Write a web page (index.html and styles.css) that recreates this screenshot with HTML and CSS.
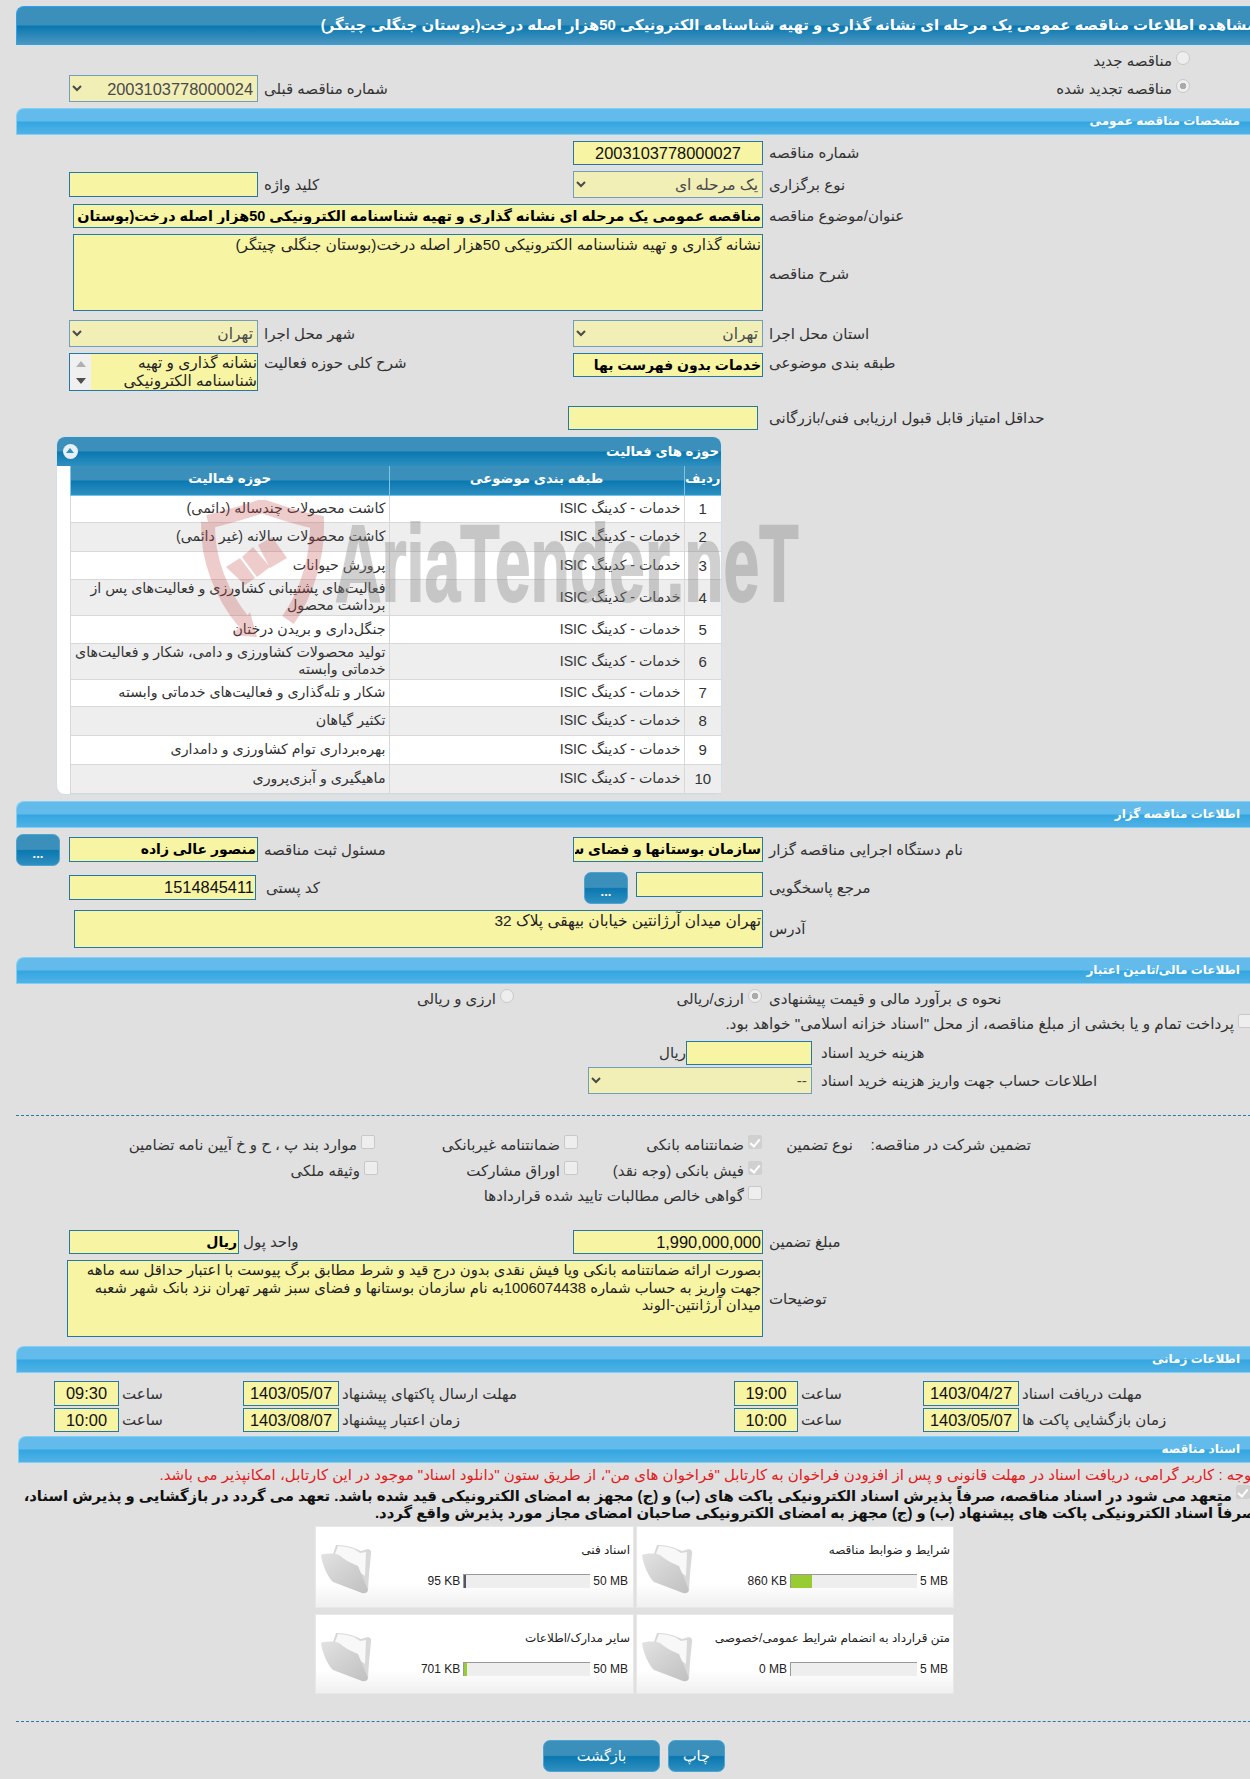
FILE: index.html
```html
<!DOCTYPE html>
<html lang="fa">
<head>
  <meta charset="UTF-8">
  <title>مشاهده اطلاعات مناقصه</title>
  <link rel="stylesheet" href="styles.css">
</head>
<body>
  <div class="page">
    <h1 class="title-bar">مشاهده اطلاعات مناقصه عمومی یک مرحله ای نشانه گذاری و تهیه شناسنامه الکترونیکی 50هزار اصله درخت(بوستان جنگلی چیتگر)</h1>

    <!-- Renewal -->
    <div class="grid-form renewal">
      <label class="check-line wide"><input type="radio" class="radio" disabled> مناقصه جدید</label>
      <label class="check-line first-col"><input type="radio" class="radio" checked disabled> مناقصه تجدید شده</label>
      <div class="field-label">شماره مناقصه قبلی</div>
      <select class="select num-value"><option>2003103778000024</option></select>
    </div>

    <!-- General -->
    <h2 class="section-bar">مشخصات مناقصه عمومی</h2>
    <div class="grid-form general">
      <div class="field-label">شماره مناقصه</div>
      <input class="input num center" value="2003103778000027" readonly>
      <div class="spacer"></div>

      <div class="field-label">نوع برگزاری</div>
      <select class="select"><option>یک مرحله ای</option></select>
      <div class="field-label">کلید واژه</div>
      <input class="input keyword" readonly>

      <div class="field-label">عنوان/موضوع مناقصه</div>
      <input class="input bold topic span-3" value="مناقصه عمومی یک مرحله ای نشانه گذاری و تهیه شناسنامه الکترونیکی 50هزار اصله درخت(بوستان جنگلی چیتگر)" readonly>

      <div class="field-label">شرح مناقصه</div>
      <textarea class="input area span-3" readonly>نشانه گذاری و تهیه شناسنامه الکترونیکی 50هزار اصله درخت(بوستان جنگلی چیتگر)</textarea>

      <div class="field-label">استان محل اجرا</div>
      <select class="select"><option>تهران</option></select>
      <div class="field-label">شهر محل اجرا</div>
      <select class="select"><option>تهران</option></select>

      <div class="field-label top">طبقه بندی موضوعی</div>
      <input class="input bold short" value="خدمات بدون فهرست بها" readonly>
      <div class="field-label top">شرح کلی حوزه فعالیت</div>
      <div class="scroll-box">
        <textarea class="input scroll-area" readonly>نشانه گذاری و تهیه شناسنامه الکترونیکی</textarea>
        <span class="scroll-rail"><i class="arrow-up"></i><i class="arrow-down"></i></span>
      </div>

      <div class="field-label">حداقل امتیاز قابل قبول ارزیابی فنی/بازرگانی</div>
      <input class="input shifted" readonly>
    </div>

    <!-- Activity table -->
    <div class="panel">
      <div class="panel-head">
        <span>حوزه های فعالیت</span>
        <span class="collapse"></span>
      </div>
      <table class="activity">
        <thead>
          <tr><th class="c-no">ردیف</th><th class="c-cat">طبقه بندی موضوعی</th><th>حوزه فعالیت</th></tr>
        </thead>
        <tbody>
          <tr class="h27"><td class="c-no">1</td><td>خدمات - کدینگ ISIC</td><td>کاشت محصولات چندساله (دائمی)</td></tr>
          <tr class="h29"><td class="c-no">2</td><td>خدمات - کدینگ ISIC</td><td>کاشت محصولات سالانه (غیر دائمی)</td></tr>
          <tr class="h28"><td class="c-no">3</td><td>خدمات - کدینگ ISIC</td><td>پرورش حیوانات</td></tr>
          <tr class="h36"><td class="c-no">4</td><td>خدمات - کدینگ ISIC</td><td>فعالیت‌های پشتیبانی کشاورزی و فعالیت‌های پس از برداشت محصول</td></tr>
          <tr class="h28"><td class="c-no">5</td><td>خدمات - کدینگ ISIC</td><td>جنگل‌داری و بریدن درختان</td></tr>
          <tr class="h36"><td class="c-no">6</td><td>خدمات - کدینگ ISIC</td><td>تولید محصولات کشاورزی و دامی، شکار و فعالیت‌های خدماتی وابسته</td></tr>
          <tr class="h27"><td class="c-no">7</td><td>خدمات - کدینگ ISIC</td><td>شکار و تله‌گذاری و فعالیت‌های خدماتی وابسته</td></tr>
          <tr class="h29"><td class="c-no">8</td><td>خدمات - کدینگ ISIC</td><td>تکثیر گیاهان</td></tr>
          <tr class="h29"><td class="c-no">9</td><td>خدمات - کدینگ ISIC</td><td>بهره‌برداری توام کشاورزی و دامداری</td></tr>
          <tr class="h29"><td class="c-no">10</td><td>خدمات - کدینگ ISIC</td><td>ماهیگیری و آبزی‌پروری</td></tr>
        </tbody>
      </table>
      <div class="watermark">
        <svg class="wm-shield" viewBox="0 0 126 140" width="126" height="140">
          <path d="M8 22 C30 16 46 12 62 6 C80 12 96 18 117 22 C118 54 108 92 88 120" fill="none" stroke="#c84848" stroke-width="14"/>
          <path d="M8 22 C7 60 22 96 44 122" fill="none" stroke="#c84848" stroke-width="14"/>
          <path d="M33 135 L50 112 L57 137Z" fill="#c84848"/>
          <path d="M26 67 L40 58 L55 78 L45 85Z M42 57 L53 47 L70 67 L57 77Z M58 45 L72 37 L87 58 L70 68Z" fill="#c84848"/>
        </svg>
        <span class="wm-text">AriaTender.neT</span>
      </div>
    </div>

    <!-- Organizer -->
    <h2 class="section-bar">اطلاعات مناقصه گزار</h2>
    <div class="grid-form organizer">
      <div class="field-label">نام دستگاه اجرایی مناقصه گزار</div>
      <input class="input bold push" value="سازمان بوستانها و فضای سبز شهر تهران" readonly>
      <div class="field-label">مسئول ثبت مناقصه</div>
      <input class="input bold push" value="منصور عالی زاده" readonly>
      <button class="btn dots">...</button>

      <div class="field-label">مرجع پاسخگویی</div>
      <div class="with-btn">
        <input class="input ref" readonly>
        <button class="btn dots">...</button>
      </div>
      <div class="field-label zip-label">کد پستی</div>
      <input class="input num push zip" value="1514845411" readonly>
      <div class="filler"></div>

      <div class="field-label">آدرس</div>
      <textarea class="input area span-3 addr" readonly>تهران میدان آرژانتین خیابان بیهقی پلاک 32</textarea>
    </div>

    <!-- Finance -->
    <h2 class="section-bar">اطلاعات مالی/تامین اعتبار</h2>
    <div class="finance">
      <div class="finance-row price-row">
        <div class="field-label price-label">نحوه ی برآورد مالی و قیمت پیشنهادی</div>
        <label class="check-line opt-first"><input type="radio" class="radio" checked disabled> ارزی/ریالی</label>
        <label class="check-line"><input type="radio" class="radio" disabled> ارزی و ریالی</label>
      </div>
      <label class="check-line treasury"><input type="checkbox" class="check" disabled> پرداخت تمام و یا بخشی از مبلغ مناقصه، از محل "اسناد خزانه اسلامی" خواهد بود.</label>
      <div class="finance-row cost-row">
        <div class="field-label wide-label">هزینه خرید اسناد</div>
        <input class="input cost" readonly>
        <span class="unit">ریال</span>
      </div>
      <div class="finance-row">
        <div class="field-label wide-label account-label">اطلاعات حساب جهت واریز هزینه خرید اسناد</div>
        <select class="select account"><option>--</option></select>
      </div>
    </div>

    <hr class="dash">

    <!-- Guarantee -->
    <div class="guarantee">
      <div class="guarantee-labels">
        <span class="g-main">تضمین شرکت در مناقصه:</span>
        <span class="g-type">نوع تضمین</span>
      </div>
      <div class="guarantee-options">
        <label class="check-line"><input type="checkbox" class="check" checked disabled> ضمانتنامه بانکی</label>
        <label class="check-line"><input type="checkbox" class="check" disabled> ضمانتنامه غیربانکی</label>
        <label class="check-line nudge"><input type="checkbox" class="check" disabled> موارد بند پ ، ح و خ آیین نامه تضامین</label>
        <label class="check-line"><input type="checkbox" class="check" checked disabled> فیش بانکی (وجه نقد)</label>
        <label class="check-line"><input type="checkbox" class="check" disabled> اوراق مشارکت</label>
        <label class="check-line"><input type="checkbox" class="check" disabled> وثیقه ملکی</label>
        <label class="check-line all"><input type="checkbox" class="check" disabled> گواهی خالص مطالبات تایید شده قراردادها</label>
      </div>
    </div>

    <div class="grid-form amounts">
      <div class="field-label">مبلغ تضمین</div>
      <input class="input num" value="1,990,000,000" readonly>
      <div class="currency">
        <div class="field-label">واحد پول</div>
        <input class="input bold cur" value="ریال" readonly>
      </div>

      <div class="field-label">توضیحات</div>
      <textarea class="input area span-3 notes" readonly>بصورت ارائه ضمانتنامه بانکی ویا فیش نقدی بدون درج قید و شرط مطابق برگ پیوست با اعتبار حداقل سه ماهه جهت واریز به حساب شماره 1006074438به نام سازمان بوستانها و فضای سبز شهر تهران نزد بانک شهر شعبه میدان آرژانتین-الوند</textarea>
    </div>

    <!-- Dates -->
    <h2 class="section-bar">اطلاعات زمانی</h2>
    <div class="times">
      <div class="field-label">مهلت دریافت اسناد</div>
      <input class="input num center" value="1403/04/27" readonly>
      <div class="field-label">ساعت</div>
      <input class="input num center" value="19:00" readonly>
      <div class="field-label">مهلت ارسال پاکتهای پیشنهاد</div>
      <input class="input num center" value="1403/05/07" readonly>
      <div class="field-label">ساعت</div>
      <input class="input num center" value="09:30" readonly>

      <div class="field-label">زمان بازگشایی پاکت ها</div>
      <input class="input num center" value="1403/05/07" readonly>
      <div class="field-label">ساعت</div>
      <input class="input num center" value="10:00" readonly>
      <div class="field-label">زمان اعتبار پیشنهاد</div>
      <input class="input num center" value="1403/08/07" readonly>
      <div class="field-label">ساعت</div>
      <input class="input num center" value="10:00" readonly>
    </div>

    <!-- Documents -->
    <h2 class="section-bar docs-bar">اسناد مناقصه</h2>
    <p class="notice">توجه : کاربر گرامی، دریافت اسناد در مهلت قانونی و پس از افزودن فراخوان به کارتابل "فراخوان های من"، از طریق ستون "دانلود اسناد" موجود در این کارتابل، امکانپذیر می باشد.</p>
    <div class="pledge">
      <div class="pledge-line"><input type="checkbox" class="check" checked disabled> متعهد می شود در اسناد مناقصه، صرفاً پذیرش اسناد الکترونیکی پاکت های (ب) و (ج) مجهز به امضای الکترونیکی قید شده باشد. تعهد می گردد در بازگشایی و پذیرش اسناد،</div>
      <div class="pledge-line">صرفاً اسناد الکترونیکی پاکت های پیشنهاد (ب) و (ج) مجهز به امضای الکترونیکی صاحبان امضای مجاز مورد پذیرش واقع گردد.</div>
    </div>

    <div class="doc-cards">
      <div class="doc-card">
        <div class="doc-title">شرایط و ضوابط مناقصه</div>
        <div class="doc-usage"><span class="size">5 MB</span><span class="bar"><i class="fill" style="width: 21px"></i></span><span class="size">860 KB</span></div>
        <svg class="folder" viewBox="0 0 54 52"><use href="#folder"/></svg>
      </div>
      <div class="doc-card">
        <div class="doc-title">اسناد فنی</div>
        <div class="doc-usage"><span class="size">50 MB</span><span class="bar"><i class="fill dark" style="width: 2px"></i></span><span class="size">95 KB</span></div>
        <svg class="folder" viewBox="0 0 54 52"><use href="#folder"/></svg>
      </div>
      <div class="doc-card">
        <div class="doc-title">متن قرارداد به انضمام شرایط عمومی/خصوصی</div>
        <div class="doc-usage"><span class="size">5 MB</span><span class="bar"><i class="fill" style="width: 0"></i></span><span class="size">0 MB</span></div>
        <svg class="folder" viewBox="0 0 54 52"><use href="#folder"/></svg>
      </div>
      <div class="doc-card">
        <div class="doc-title">سایر مدارک/اطلاعات</div>
        <div class="doc-usage"><span class="size">50 MB</span><span class="bar"><i class="fill" style="width: 3px"></i></span><span class="size">701 KB</span></div>
        <svg class="folder" viewBox="0 0 54 52"><use href="#folder"/></svg>
      </div>
    </div>

    <hr class="dash bottom-dash">

    <div class="actions">
      <button class="btn action print">چاپ</button>
      <button class="btn action back">بازگشت</button>
    </div>
  </div>

  <svg width="0" height="0" class="defs">
    <defs>
      <linearGradient id="flap" x1="0" y1="0" x2="1" y2="1">
        <stop offset="0" stop-color="#e2e2e2"/>
        <stop offset="1" stop-color="#c0c0c0"/>
      </linearGradient>
      <g id="folder">
        <path d="M13 10 L16 1 Q26 1 34 4 L41 7 L48 5 Q52 6 51 10 L49 30 L48 46 Z" fill="#d8d8d8"/>
        <path d="M15 10 L18 2 Q26 2 34 5 L40 9 L46 8 L45 32 Z" fill="#f8f8f8"/>
        <path d="M1 11 C6 9 14 9 19 11 C24 15 30 19 38 22 L48 46 Q47 50 42 49 L13 38 C8 34 2 20 1 11Z" fill="url(#flap)"/>
      </g>
    </defs>
  </svg>
</body>
</html>
```

FILE: styles.css
```css
html, body {
  margin: 0;
  padding: 0;
  background: #e0e0e0;
}
body {
  font-family: "Liberation Sans", "DejaVu Sans", sans-serif;
  font-size: 15px;
  color: #333;
  overflow-x: hidden;
}
.page {
  direction: rtl;
  width: 1240px;
  margin-left: 16px;
  padding-top: 6px;
}
.defs {
  position: absolute;
}
.title-bar {
  height: 39px;
  margin: 0;
  line-height: 37px;
  font-size: 14.9px;
  white-space: nowrap;
  color: #fff;
  background: linear-gradient(#3a8fbb 0, #3a8fbb 48%, #0a78b0 52%, #4a97c0 100%);
  border: 1px solid #2f9ff0;
  border-width: 1px 0 1px 1px;
  box-sizing: border-box;
  border-top-left-radius: 8px;
}
.section-bar {
  height: 27px;
  margin: 0;
  padding-right: 16px;
  line-height: 25px;
  font-size: 12px;
  color: #fff;
  background: linear-gradient(#62bbea 0, #62bbea 48%, #34a6e0 52%, #50b2e6 100%);
  border: 1px solid #7fd0f4;
  border-width: 1px 0 1px 1px;
  box-sizing: border-box;
  border-top-left-radius: 8px;
}
.docs-bar {
  margin-left: 2px;
  margin-top: 4px;
}

/* Form grid, right to left */
.grid-form {
  display: grid;
  grid-template-columns: 493px 190px 315px 189px;
  padding-left: 53px;
}
.field-label {
  text-align: left;
  padding-left: 6px;
  align-self: center;
  white-space: nowrap;
}
.field-label.top {
  align-self: start;
  padding-top: 1px;
}
.spacer {
  grid-column: span 2;
}
.input {
  box-sizing: border-box;
  width: 100%;
  height: 100%;
  margin: 0;
  padding: 0 1px;
  font-family: inherit;
  font-size: 15.4px;
  color: #222;
  background: #f7f4a4;
  border: 1px solid #2378a8;
  border-radius: 0;
  outline: none;
}
.input.bold {
  font-size: 14px;
  font-weight: bold;
  color: #000;
}
.input.topic {
  font-size: 14.4px;
}
.input.num {
  font-size: 16.4px;
  color: #111;
}
.input.center {
  text-align: center;
}
.select {
  box-sizing: border-box;
  width: 100%;
  height: 100%;
  margin: 0;
  font-family: inherit;
  font-size: 15.5px;
  color: #4a4a4a;
  background: #f1eeb6;
  border: 1px solid #6e9fbe;
  border-radius: 0;
}
.select.num-value {
  font-size: 16.4px;
}
.span-3 {
  grid-column: span 3;
}
.area {
  resize: none;
  overflow: hidden;
  line-height: 18px;
  padding-top: 1px;
}

.check-line {
  display: flex;
  align-items: center;
  gap: 4px;
  white-space: nowrap;
}
.radio, .check {
  appearance: none;
  position: relative;
  top: -3px;
  width: 14px;
  height: 14px;
  margin: 0;
  flex: none;
  background: #eee;
  border: 1px solid #c8c8c8;
  box-sizing: border-box;
}
.radio {
  border-radius: 50%;
}
.radio:checked {
  background: radial-gradient(circle, #aaa 0, #aaa 35%, #eee 40%);
}
.check {
  border-radius: 2px;
}
.check:checked {
  background: #d0d0d0;
  border-color: #d0d0d0;
}
.check:checked::after {
  content: "";
  position: absolute;
  left: 3px;
  top: 1px;
  width: 4px;
  height: 8px;
  border: solid #fff;
  border-width: 0 2px 2px 0;
  transform: rotate(40deg);
}

.renewal {
  grid-template-rows: 23px 27px;
  padding-top: 7px;
  padding-bottom: 6px;
}
.renewal .wide {
  grid-column: 1 / -1;
  padding-right: 66px;
  align-self: start;
}
.renewal .first-col {
  grid-column: 1 / 3;
  padding-right: 66px;
}

.general {
  grid-template-rows: 24px 27px 24px 80px 27px 47px 24px;
  row-gap: 6px;
  padding-top: 6px;
}
.keyword {
  height: 25px;
  align-self: center;
}
.general .span-3 {
  margin-left: 4px;
  width: auto;
}
.general .area {
  height: 77px;
}
.short {
  height: 24px;
}
.scroll-box {
  display: flex;
  height: 38px;
  box-sizing: border-box;
  background: #f7f4a4;
  border: 1px solid #2378a8;
}
.scroll-area {
  flex: 1;
  min-width: 0;
  border: 0;
  padding: 0;
  resize: none;
  overflow: hidden;
  line-height: 18px;
}
.scroll-rail {
  display: flex;
  flex-direction: column;
  align-items: center;
  justify-content: space-between;
  width: 21px;
  flex: none;
  padding: 7px 0 6px;
  box-sizing: border-box;
  background: #f0f0f0;
}
.arrow-up, .arrow-down {
  width: 0;
  height: 0;
  border-left: 5px solid transparent;
  border-right: 5px solid transparent;
}
.arrow-up {
  border-bottom: 6px solid #b0b0b0;
}
.arrow-down {
  border-top: 6px solid #505050;
}
.shifted {
  margin-right: 5px;
  margin-left: -5px;
  width: 190px;
}

/* Activity panel */
.panel {
  position: relative;
  width: 664px;
  margin: 7px auto 7px 0;
  margin-left: 41px;
  background: #fff;
  border-radius: 8px;
  box-shadow: 0 0 0 1px #cfe0ea;
}
.panel-head {
  display: flex;
  justify-content: space-between;
  align-items: center;
  height: 29px;
  padding: 0 2px 0 6px;
  font-size: 13.3px;
  font-weight: bold;
  color: #fff;
  border-radius: 8px 8px 0 0;
  background: linear-gradient(#3a8fbb 0, #3a8fbb 48%, #0a78b0 52%, #2f8fc0 100%);
}
.collapse {
  position: relative;
  width: 15px;
  height: 15px;
  border-radius: 50%;
  background: #e6f0f6;
}
.collapse::after {
  content: "";
  position: absolute;
  left: 3px;
  top: 4px;
  border: 4.5px solid transparent;
  border-top-width: 0;
  border-bottom: 5px solid #2f8fc0;
}
.activity {
  width: 651px;
  border-collapse: collapse;
  table-layout: fixed;
  font-size: 14.2px;
}
.activity th {
  height: 29px;
  padding: 0 0 4px;
  box-sizing: border-box;
  font-size: 13.3px;
  color: #fff;
  background: linear-gradient(#3a8fbb 0, #3a8fbb 48%, #0a78b0 52%, #2f8fc0 100%);
  border-left: 1px solid #7cc4e6;
  border-bottom: 1px solid #6cc6ee;
}
.activity td {
  padding: 0 3px;
  line-height: 17px;
  color: #333;
  border-left: 1px solid #d8d8d8;
  border-bottom: 1px solid #d8d8d8;
}
.activity tbody tr:nth-child(even) td {
  background: #eeeeee;
}
.c-no {
  width: 37px;
  text-align: center;
}
.activity td.c-no {
  font-size: 15px;
}
.c-cat {
  width: 295px;
}
.h27 { height: 27px; }
.h28 { height: 28px; }
.h29 { height: 29px; }
.h36 { height: 36px; }
.watermark {
  position: absolute;
  left: 143px;
  top: 63px;
  pointer-events: none;
  direction: ltr;
}
.wm-shield {
  display: block;
  opacity: 0.27;
}
.wm-text {
  position: absolute;
  left: 135px;
  top: 8px;
  font-family: "Liberation Sans", sans-serif;
  font-size: 110px;
  line-height: 110px;
  font-weight: bold;
  white-space: nowrap;
  color: #808080;
  opacity: 0.36;
  -webkit-text-stroke: 2px #808080;
  transform: scaleX(0.585);
  transform-origin: left top;
}

/* Organizer */
.organizer {
  grid-template-columns: 493px 190px 315px 189px 53px;
  grid-template-rows: 32px 32px 38px;
  row-gap: 6px;
  padding: 6px 0 9px;
}
.push {
  height: 25px;
  align-self: start;
  margin-top: 3px;
}
.dots {
  width: 44px;
  height: 32px;
  flex: none;
}
.organizer > .dots {
  justify-self: end;
}
.with-btn {
  display: flex;
  gap: 8px;
}
.ref {
  width: 127px;
  height: 25px;
}
.zip {
  width: 187px;
  justify-self: end;
  padding-left: 3px;
}
.zip-label {
  padding-left: 8px;
}
.addr {
  margin-left: 0;
  width: 689px;
  height: 38px;
}
.btn {
  padding: 0;
  font-family: inherit;
  font-size: 14.5px;
  color: #fff;
  border: 1px solid #4aa5d3;
  border-radius: 7px;
  background: linear-gradient(#3a8fbb 0, #3a8fbb 48%, #0a78b0 52%, #2f8fc0 100%);
}
.btn.dots {
  font-size: 13px;
  font-weight: bold;
  padding-top: 8px;
}

/* Finance */
.finance {
  padding-top: 7px;
}
.finance-row {
  display: flex;
}
.price-row {
  height: 17px;
  align-items: center;
}
.price-label {
  width: 487px;
  flex: none;
}
.opt-first {
  width: 248px;
  flex: none;
  margin-right: 1px;
}
.treasury {
  margin: 8px 4px 0 0;
  height: 17px;
  font-size: 15.3px;
}
.cost-row {
  margin-top: 8px;
  height: 24px;
}
.wide-label {
  width: 435px;
  flex: none;
  padding-left: 9px;
}
.account-label {
  padding-top: 4px;
}
.cost {
  width: 126px;
  flex: none;
}
.unit {
  align-self: center;
}
.account {
  width: 224px;
  height: 27px;
  margin-top: 2px;
}
.dash {
  height: 0;
  margin: 21px 0 0;
  border: 0;
  border-top: 1px dashed #2a7ba8;
}
.bottom-dash {
  margin-top: 28px;
}

/* Guarantee */
.guarantee {
  display: flex;
  padding-top: 17px;
}
.guarantee-labels {
  display: flex;
  width: 493px;
  flex: none;
  height: 25px;
  align-items: center;
  white-space: nowrap;
}
.g-main {
  width: 178px;
  flex: none;
  margin-right: 225px;
}
.guarantee-options {
  display: grid;
  grid-template-columns: 184px 200px 1fr;
  grid-auto-rows: 25.5px;
  align-items: center;
  padding-right: 1px;
}
.nudge {
  margin-right: 3px;
}
.all {
  grid-column: 1 / -1;
}

.amounts {
  grid-template-rows: 24px 77px;
  row-gap: 6px;
  padding-top: 21px;
}
.currency {
  grid-column: 3 / 5;
  display: flex;
  justify-content: flex-end;
  gap: 4px;
}
.currency .field-label {
  padding-left: 0;
}
.cur {
  width: 170px;
}
.notes {
  width: 696px;
  margin-left: 0;
  font-size: 14.8px;
  line-height: 17.5px;
}

/* Dates */
.amounts + .section-bar {
  margin-top: 9px;
}
.times {
  display: grid;
  grid-template-columns: 237px 96px 125px 64px 395px 96px 124px 65px;
  grid-template-rows: 25px 24px;
  row-gap: 2px;
  margin-top: 8px;
}
.times .field-label {
  padding-left: 3px;
}

/* Documents */
.notice {
  margin: 4px 0 0;
  color: #e02020;
  line-height: 16px;
  white-space: nowrap;
}
.pledge {
  margin-top: 5px;
  font-weight: bold;
  color: #111;
  font-size: 14.8px;
  line-height: 17px;
  white-space: nowrap;
}
.pledge-line {
  display: flex;
  align-items: flex-start;
  gap: 4px;
}
.pledge-line .check {
  margin-right: 6px;
}
.doc-cards {
  display: grid;
  grid-template-columns: 316px 317px;
  grid-template-rows: 80px 78px;
  gap: 8px 4px;
  width: 637px;
  margin: 5px 303px 0 auto;
}
.doc-card {
  position: relative;
  padding: 16px 3px 0;
  background: linear-gradient(#fff 0, #fff 70%, #f0f0f0 100%);
  box-shadow: 0 0 0 1px #e8e8e8;
}
.doc-title {
  font-size: 12px;
  line-height: 14px;
  color: #222;
}
.doc-usage {
  display: flex;
  align-items: center;
  gap: 3px;
  height: 14px;
  margin-top: 17px;
  padding-right: 2px;
  font-size: 12px;
  color: #222;
}
.size {
  direction: ltr;
}
.bar {
  position: relative;
  width: 127px;
  height: 14px;
  background: #eee;
  border-top: 1px solid #999;
  border-left: 1px solid #999;
  box-sizing: border-box;
}
.fill {
  position: absolute;
  left: 0;
  top: 0;
  bottom: 0;
  background: #9c3;
}
.fill.dark {
  background: #556;
}
.folder {
  position: absolute;
  left: 4px;
  top: 17px;
  width: 54px;
  height: 52px;
}

.actions {
  display: flex;
  justify-content: center;
  gap: 8px;
  padding: 18px 4px 0 0;
}
.action {
  height: 32px;
}
.print {
  width: 57px;
}
.back {
  width: 117px;
}
```
